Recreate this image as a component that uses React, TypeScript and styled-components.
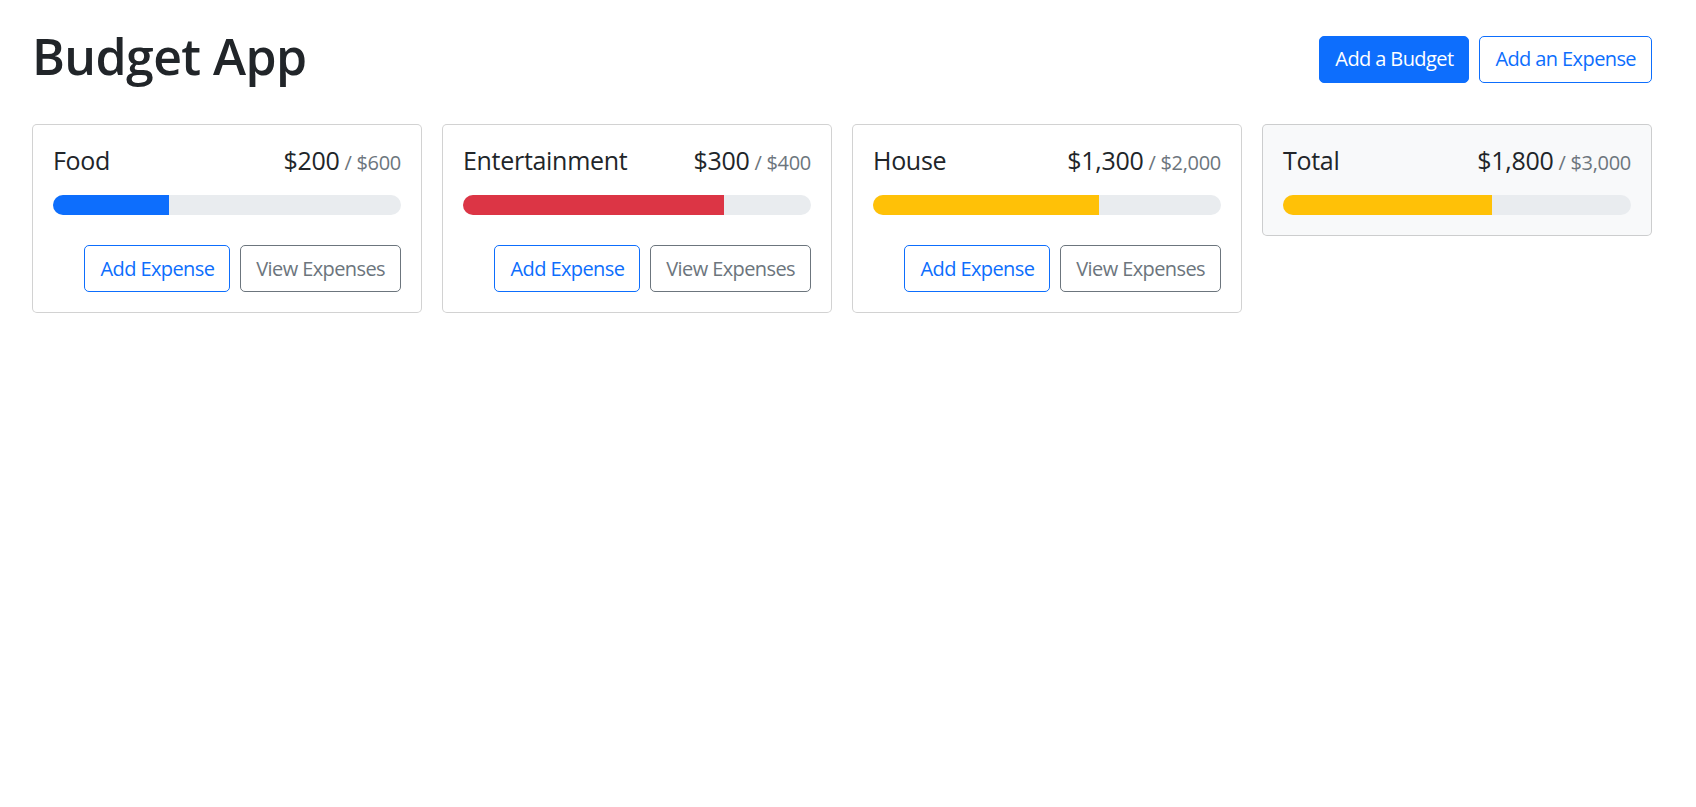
import React from "react";
import styled, { createGlobalStyle } from "styled-components";

const GlobalStyle = createGlobalStyle`
  *, *::before, *::after { box-sizing: border-box; }
  body {
    margin: 0;
    background: #fff;
    color: #212529;
    font-family: "Open Sans", "Noto Sans", sans-serif;
    font-size: 20px;
    line-height: 1.5;
  }
`;

const Container = styled.div`
  padding: 24px 44px 0 32px;
`;

const Header = styled.header`
  display: flex;
  align-items: center;
  gap: 10px;
  margin-bottom: 30px;
`;

const Title = styled.h1`
  margin: 0 auto 10px 0;
  font-size: 50px;
  font-weight: 600;
  line-height: 60px;
  letter-spacing: -0.6px;
  transform: translateY(2px);
`;

type Variant = "primary" | "outline-primary" | "outline-secondary";

const Button = styled.button<{ $variant: Variant; $push?: boolean }>`
  font-family: inherit;
  font-size: 20px;
  line-height: 30px;
  padding: 7.5px 15px;
  border-radius: 5px;
  border: 1px solid ${(p) => (p.$variant === "outline-secondary" ? "#6c757d" : "#0d6efd")};
  background: ${(p) => (p.$variant === "primary" ? "#0d6efd" : "#fff")};
  color: ${(p) =>
    p.$variant === "primary" ? "#fff" : p.$variant === "outline-primary" ? "#0d6efd" : "#6c757d"};
  margin-left: ${(p) => (p.$push ? "auto" : "0")};
  cursor: pointer;
  letter-spacing: -0.6px;
`;

const Grid = styled.div`
  display: grid;
  grid-template-columns: repeat(4, 1fr);
  gap: 20px;
  align-items: start;
`;

const Card = styled.div<{ $muted?: boolean }>`
  border: 1px solid rgba(0, 0, 0, 0.175);
  border-radius: 5px;
  background: ${(p) => (p.$muted ? "#f8f9fa" : "#fff")};
  padding: 20px;
`;

const CardTitle = styled.div`
  display: flex;
  justify-content: space-between;
  align-items: baseline;
  font-size: 25px;
  line-height: 1.2;
  margin-bottom: 20px;
  letter-spacing: -0.3px;
`;

const Amount = styled.div`
  display: flex;
  align-items: baseline;
`;

const Max = styled.span`
  color: #6c757d;
  font-size: 20px;
  margin-left: 5px;
`;

const Progress = styled.div`
  height: 20px;
  border-radius: 999px;
  background: #e9ecef;
  overflow: hidden;
  display: flex;
`;

const Bar = styled.div<{ $color: string }>`
  height: 100%;
  background: ${(p) => p.$color};
`;

const Actions = styled.div`
  display: flex;
  gap: 10px;
  margin-top: 30px;
`;

const fmt = (n: number) => "$" + n.toLocaleString("en-US");

const barColor = (amount: number, max: number) => {
  const r = amount / max;
  if (r < 0.5) return "#0d6efd";
  if (r < 0.75) return "#ffc107";
  return "#dc3545";
};

function BudgetCard({ name, amount, max, total }: { name: string; amount: number; max: number; total?: boolean }) {
  return (
    <Card $muted={total}>
      <CardTitle>
        <div>{name}</div>
        <Amount>
          {fmt(amount)}
          <Max>/ {fmt(max)}</Max>
        </Amount>
      </CardTitle>
      <Progress>
        <Bar $color={barColor(amount, max)} style={{ width: `${(amount / max) * 100}%` }} />
      </Progress>
      {!total && (
        <Actions>
          <Button $variant="outline-primary" $push>Add Expense</Button>
          <Button $variant="outline-secondary">View Expenses</Button>
        </Actions>
      )}
    </Card>
  );
}

export default function App() {
  const budgets = [
    { name: "Food", amount: 200, max: 600 },
    { name: "Entertainment", amount: 300, max: 400 },
    { name: "House", amount: 1300, max: 2000 },
  ];
  return (
    <>
      <GlobalStyle />
      <Container>
        <Header>
          <Title>Budget App</Title>
          <Button $variant="primary">Add a Budget</Button>
          <Button $variant="outline-primary">Add an Expense</Button>
        </Header>
        <Grid>
          {budgets.map((b) => (
            <BudgetCard key={b.name} {...b} />
          ))}
          <BudgetCard name="Total" amount={1800} max={3000} total />
        </Grid>
      </Container>
    </>
  );
}
